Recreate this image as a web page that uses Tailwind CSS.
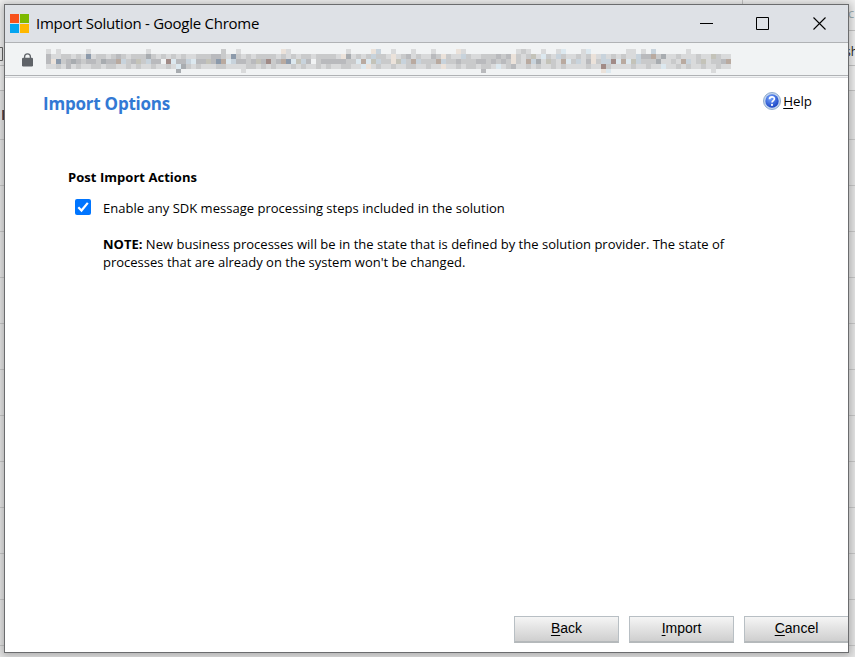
<!DOCTYPE html>
<html lang="en">
<head>
<meta charset="utf-8">
<title>Import Solution</title>
<script src="https://cdn.jsdelivr.net/npm/@tailwindcss/browser@4"></script>
</head>
<body class="relative h-[657px] w-[855px] overflow-hidden bg-[#e7e7e7] font-['Open_Sans','Noto_Sans',sans-serif] text-black">
<!-- page behind the window -->
<svg class="absolute inset-0" width="855" height="657" aria-hidden="true">
  <rect width="855" height="90" fill="#f0f0f0"/>
  <rect y="90" width="855" height="50" fill="#e6e6e6"/>
  <path d="M742.5 0V5M848 30.5H855M0 65.5H5M848 65.5H855M0 90.5H5M848 90.5H855" stroke="#c4c4c4"/>
  <path d="M0 47.500H2.500V60.500H0" fill="none" stroke="#666" />
  <path d="M2.500 110V120" stroke="#9b684c"/><path d="M3.500 110V120" stroke="#443e55"/>
  <g id="lines" stroke="#c9c9c9"></g>
</svg>
<span class="absolute left-[848px] top-[4px] text-[13px] leading-[18px] text-[#9eb0b5]">c</span>
<span class="absolute left-[845px] top-[43px] text-[12px] leading-[18px] text-[#222]">sh</span>

<main class="absolute left-[4px] top-[4px] flex h-[649px] w-[845px] flex-col overflow-hidden border border-[#6b6c6e] bg-white shadow-[0_1px_8px_2px_rgba(0,0,0,0.25)]">
  <header class="flex h-[38px] shrink-0 items-center border-b border-[#b0b2b5] bg-[#dee1e6] pl-[5px]">
    <svg class="-mt-px" width="19" height="19" viewBox="0 0 19 19"><path fill="#f8511c" d="M0 0h9v9H0z"/><path fill="#7db900" d="M10 0h9v9h-9z"/><path fill="#04a4f0" d="M0 10h9v9H0z"/><path fill="#feb801" d="M10 10h9v9h-9z"/></svg>
    <h1 class="-mt-px ml-[7px] w-[300px] whitespace-nowrap text-[15px] leading-[20px] tracking-[-0.26px]">Import Solution - Google Chrome</h1>
    <svg class="ml-auto mr-[21px]" width="127" height="15" viewBox="0 0 127 15" fill="none" stroke="#000"><path d="M0 7.500H13M56.500 1.500H68.500V13.500H56.500Z"/><path d="M113.500 1.500L125.500 13.500M125.500 1.500L113.500 13.500" stroke-width="1.100"/></svg>
  </header>
  <div class="flex h-[35px] shrink-0 items-start border-b border-[#d9dadd] bg-[#f1f3f4]">
    <div class="flex h-[33px] w-full items-start border-b border-[#b0b2b5] pl-[17px]">
      <svg class="mt-[10px]" width="11" height="14" viewBox="0 0 11 14"><path d="M2.600 5V3.800a2.900 2.900 0 0 1 5.800 0V5" fill="none" stroke="#5f6368" stroke-width="1.300"/><rect y="4.700" width="11" height="8.800" rx="1.200" fill="#5f6368"/></svg>
      <svg id="mosaic" class="ml-[13px] mt-[6px]" width="685" height="24" shape-rendering="crispEdges"></svg>
    </div>
  </div>
  <section class="flex grow flex-col pl-[38px]">
    <div class="flex justify-between pr-[36px]">
      <h2 class="mt-[14px] h-[23px] text-[17px] font-bold leading-[24px] tracking-[-0.22px] text-[#3279d4]">Import Options</h2>
      <a class="mt-[13px] flex items-start text-[13.3px] leading-[20px]">
        <svg class="mr-[2px] mt-px" width="18" height="18" viewBox="0 0 18 18"><defs><radialGradient id="g" cx=".4" cy=".3" r=".75"><stop offset="0" stop-color="#76a5ff"/><stop offset="1" stop-color="#153fc0"/></radialGradient></defs><circle cx="9" cy="9" r="8.500" fill="#c3d5ee" stroke="#91accd"/><circle cx="9" cy="9" r="6.700" fill="url(#g)"/><path d="M6.500 7.200C6.500 4 11.500 4.100 11.400 7C11.300 8.600 9 8.600 9 10.600" fill="none" stroke="#fff" stroke-width="1.700"/><circle cx="9" cy="12.900" r="1.050" fill="#fff"/></svg>
        <span><span class="underline underline-offset-2">H</span>elp</span>
      </a>
    </div>
    <h3 class="ml-[25px] mt-[52px] text-[13px] font-bold leading-[20px] tracking-[0.04px]">Post Import Actions</h3>
    <div class="ml-[32px] mt-[11px] flex h-[20px] items-start">
      <svg class="mt-px" width="16" height="16" viewBox="0 0 16 16" role="checkbox" aria-checked="true"><rect width="16" height="16" rx="2" fill="#0075ff"/><path d="M3.300 8.300L6.500 11.500L12.800 3.900" fill="none" stroke="#fff" stroke-width="2.200"/></svg>
      <p class="ml-[12px] whitespace-nowrap text-[13px] leading-[20px] tracking-[0.02px]">Enable any SDK message processing steps included in the solution</p>
    </div>
    <p class="ml-[60px] mt-[17px] whitespace-nowrap text-[13px] leading-[18px]"><span class="tracking-[0.01px]"><b>NOTE:</b> New business processes will be in the state that is defined by the solution provider. The state of</span><br>processes that are already on the system won't be changed.</p>
    <div class="mb-[9px] ml-[471px] mt-auto flex w-[345px] gap-[10px] font-['Liberation_Sans',Arial,sans-serif] text-[14px]">
      <button class="h-[27px] w-[105px] shrink-0 border border-b-2 border-[#b8bfc4] border-b-[#b5b9bb] bg-linear-to-b from-[#f5f5f5] to-[#cfcfcf] pb-px"><u class="underline-offset-2">B</u>ack</button>
      <button class="h-[27px] w-[105px] shrink-0 border border-b-2 border-[#b8bfc4] border-b-[#b5b9bb] bg-linear-to-b from-[#f5f5f5] to-[#cfcfcf] pb-px"><u class="underline-offset-2">I</u>mport</button>
      <button class="h-[27px] w-[105px] shrink-0 border border-b-2 border-[#b8bfc4] border-b-[#b5b9bb] bg-linear-to-b from-[#f5f5f5] to-[#cfcfcf] pb-px"><u class="underline-offset-2">C</u>ancel</button>
    </div>
  </section>
</main>
<script>
// Obscured address: each letter is one 5px cell of the palette.
const palette = {a:'#d9dadb',b:'#c9cacb',c:'#b9babd',d:'#a8acb0',e:'#8c9aab',f:'#b9aaa0',g:'#a18b87',h:'#c8d3dc',i:'#dce8ef',j:'#ebe2da',k:'#c4c3b9'};
const sparse = (pairs) => { const r = Array(137).fill('.'); pairs.forEach(([i, c]) => r[i] = c); return r.join(''); };
const rows = [
  sparse([[0,'a'],[2,'a'],[8,'a'],[20,'a'],[35,'b'],[38,'a'],[47,'j'],[48,'a'],[60,'a'],[65,'j'],[66,'h'],[69,'a'],[73,'a'],[77,'a'],[82,'j'],[83,'a'],[94,'a'],[95,'b'],[96,'a'],[99,'a'],[102,'a'],[103,'i'],[107,'a'],[108,'i'],[116,'a'],[117,'a'],[119,'a'],[121,'h'],[128,'a']]),
  'caabbabaeabbabcbabbbdbabababaabbbccbaebababbbba' + 'bababbabbbbajdababhbbajabcabaacbjbaahbaabbbc' + 'bcjbabkaibahbaababjahababaahccfbdaabaaabaakbaa',
  'cjebcdcbccbdccfhbckbhcc.gicchicckcefihccbckcgbc' + 'feikhc.bcccccbbifikhbbjkhbfhbbbfhbbcbbbccbcb' + 'cbjbafhdakbafibhacjbhhgifikhbbbdaabafhabkabbcf',
  'aabacabaabbabbaababaabaabaidbabaaabbaaaabbababa' + 'aababaababaabbaaijabaabaabbaabaajaababbabbai' + 'abcaababaababaaaabaagbaaaabaabaaiaababaabaabaaa',
  sparse([[26,'d'],[39,'a'],[87,'c'],[111,'j'],[112,'i'],[133,'a']])
];
document.getElementById('mosaic').innerHTML = rows.map((row, y) => [...row].map((c, x) =>
  palette[c] ? `<rect x="${x * 5}" y="${y * 5}" width="5" height="5" fill="${palette[c]}"/>` : '').join('')).join('');
document.getElementById('lines').innerHTML = Array.from({length: 12}, (_, i) => {
  const y = 139.5 + i * 46;
  return `<path d="M0 ${y}H5M848 ${y}H855"/>`;
}).join('');
</script>
</body>
</html>
